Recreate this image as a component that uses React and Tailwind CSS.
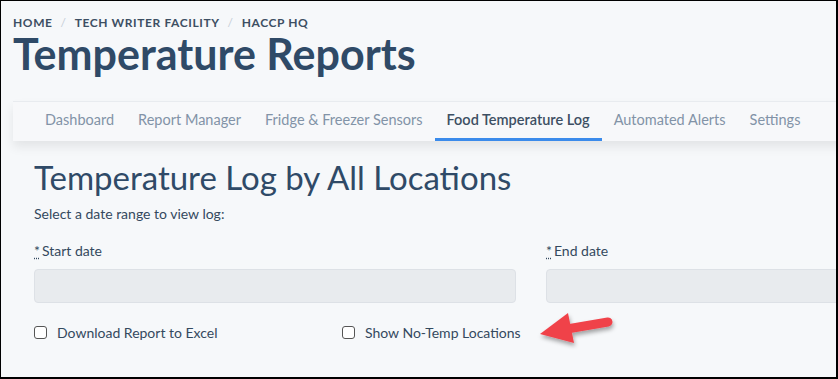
const TABS = [
  { label: 'Dashboard' },
  { label: 'Report Manager' },
  { label: 'Fridge & Freezer Sensors' },
  { label: 'Food Temperature Log', active: true },
  { label: 'Automated Alerts' },
  { label: 'Settings' },
];

function Req() {
  return (
    <span className="underline decoration-dotted decoration-[#34495e] underline-offset-2 mr-0.5">*</span>
  );
}

function Arrow() {
  return (
    <svg className="absolute left-[530px] top-[305px] pointer-events-none" width="95" height="50" viewBox="0 0 95 50">
      <defs>
        <filter id="sh" x="-20%" y="-20%" width="150%" height="160%">
          <feDropShadow dx="1" dy="3" stdDeviation="2" floodColor="#000" floodOpacity="0.35" />
        </filter>
      </defs>
      <g filter="url(#sh)">
        <line x1="36" y1="23" x2="77" y2="16" stroke="#f0424a" strokeWidth="9" strokeLinecap="round" />
        <polygon points="9,28 37,7 43,37" fill="#f0424a" />
      </g>
    </svg>
  );
}

export default function App() {
  return (
    <div
      className="relative w-[838px] h-[379px] overflow-hidden bg-[#f6f8fa] border-t border-l border-r-2 border-b-2 border-black text-[#34495e]"
      style={{ fontFamily: "Lato, 'Noto Sans', sans-serif" }}
    >
      {/* breadcrumb + title */}
      <div className="pl-3 pt-[14px]">
        <div className="flex items-center gap-[8px] text-[12px] leading-4 font-bold tracking-[0.05em] text-[#3d4f63]">
          <span>HOME</span>
          <span className="text-[#c5cdd6] font-normal">/</span>
          <span>TECH WRITER FACILITY</span>
          <span className="text-[#c5cdd6] font-normal">/</span>
          <span>HACCP HQ</span>
        </div>
        <h1 className="text-[43px] leading-[46px] font-bold text-[#2f4a67]">Temperature Reports</h1>
      </div>

      {/* tabs */}
      <div className="ml-3 mt-[24px] w-[900px] h-[40px] bg-[#f7f8fa] border-t border-[#e8ebef] shadow-[0_6px_10px_rgba(0,0,0,0.08)] flex items-stretch pl-5">
        {TABS.map(t => (
          <div
            key={t.label}
            className={
              'px-3 flex items-center text-[14.5px] border-b-[3px] ' +
              (t.active ? 'border-[#3b8beb] text-[#3d4f63] font-semibold' : 'border-transparent text-[#8293a7]')
            }
          >
            {t.label}
          </div>
        ))}
      </div>

      {/* content */}
      <div className="pl-[33px] pt-[18px]">
        <h2 className="text-[33px] leading-[36px] text-[#2f4a67]">Temperature Log by All Locations</h2>
        <p className="mt-[8px] text-[14px] text-[#34495e]">Select a date range to view log:</p>

        <div className="mt-[17px] flex gap-[30px] w-[994px]">
          <div className="w-[482px]">
            <label className="block text-[14px] leading-5"><Req />Start date</label>
            <div className="mt-[8px] h-[34px] bg-[#e8ebee] border border-[#dde1e6] rounded" />
          </div>
          <div className="w-[482px]">
            <label className="block text-[14px] leading-5"><Req />End date</label>
            <div className="mt-[8px] h-[34px] bg-[#e8ebee] border border-[#dde1e6] rounded" />
          </div>
        </div>

        <div className="mt-[19px] flex items-center text-[14px]">
          <label className="w-[308px] flex items-center gap-[10px]">
            <span className="w-[13px] h-[13px] border border-[#555] rounded-[3px] bg-white" />
            Download Report to Excel
          </label>
          <label className="flex items-center gap-[10px]">
            <span className="w-[13px] h-[13px] border border-[#555] rounded-[3px] bg-white" />
            Show No-Temp Locations
          </label>
        </div>
      </div>

      <Arrow />
    </div>
  );
}
